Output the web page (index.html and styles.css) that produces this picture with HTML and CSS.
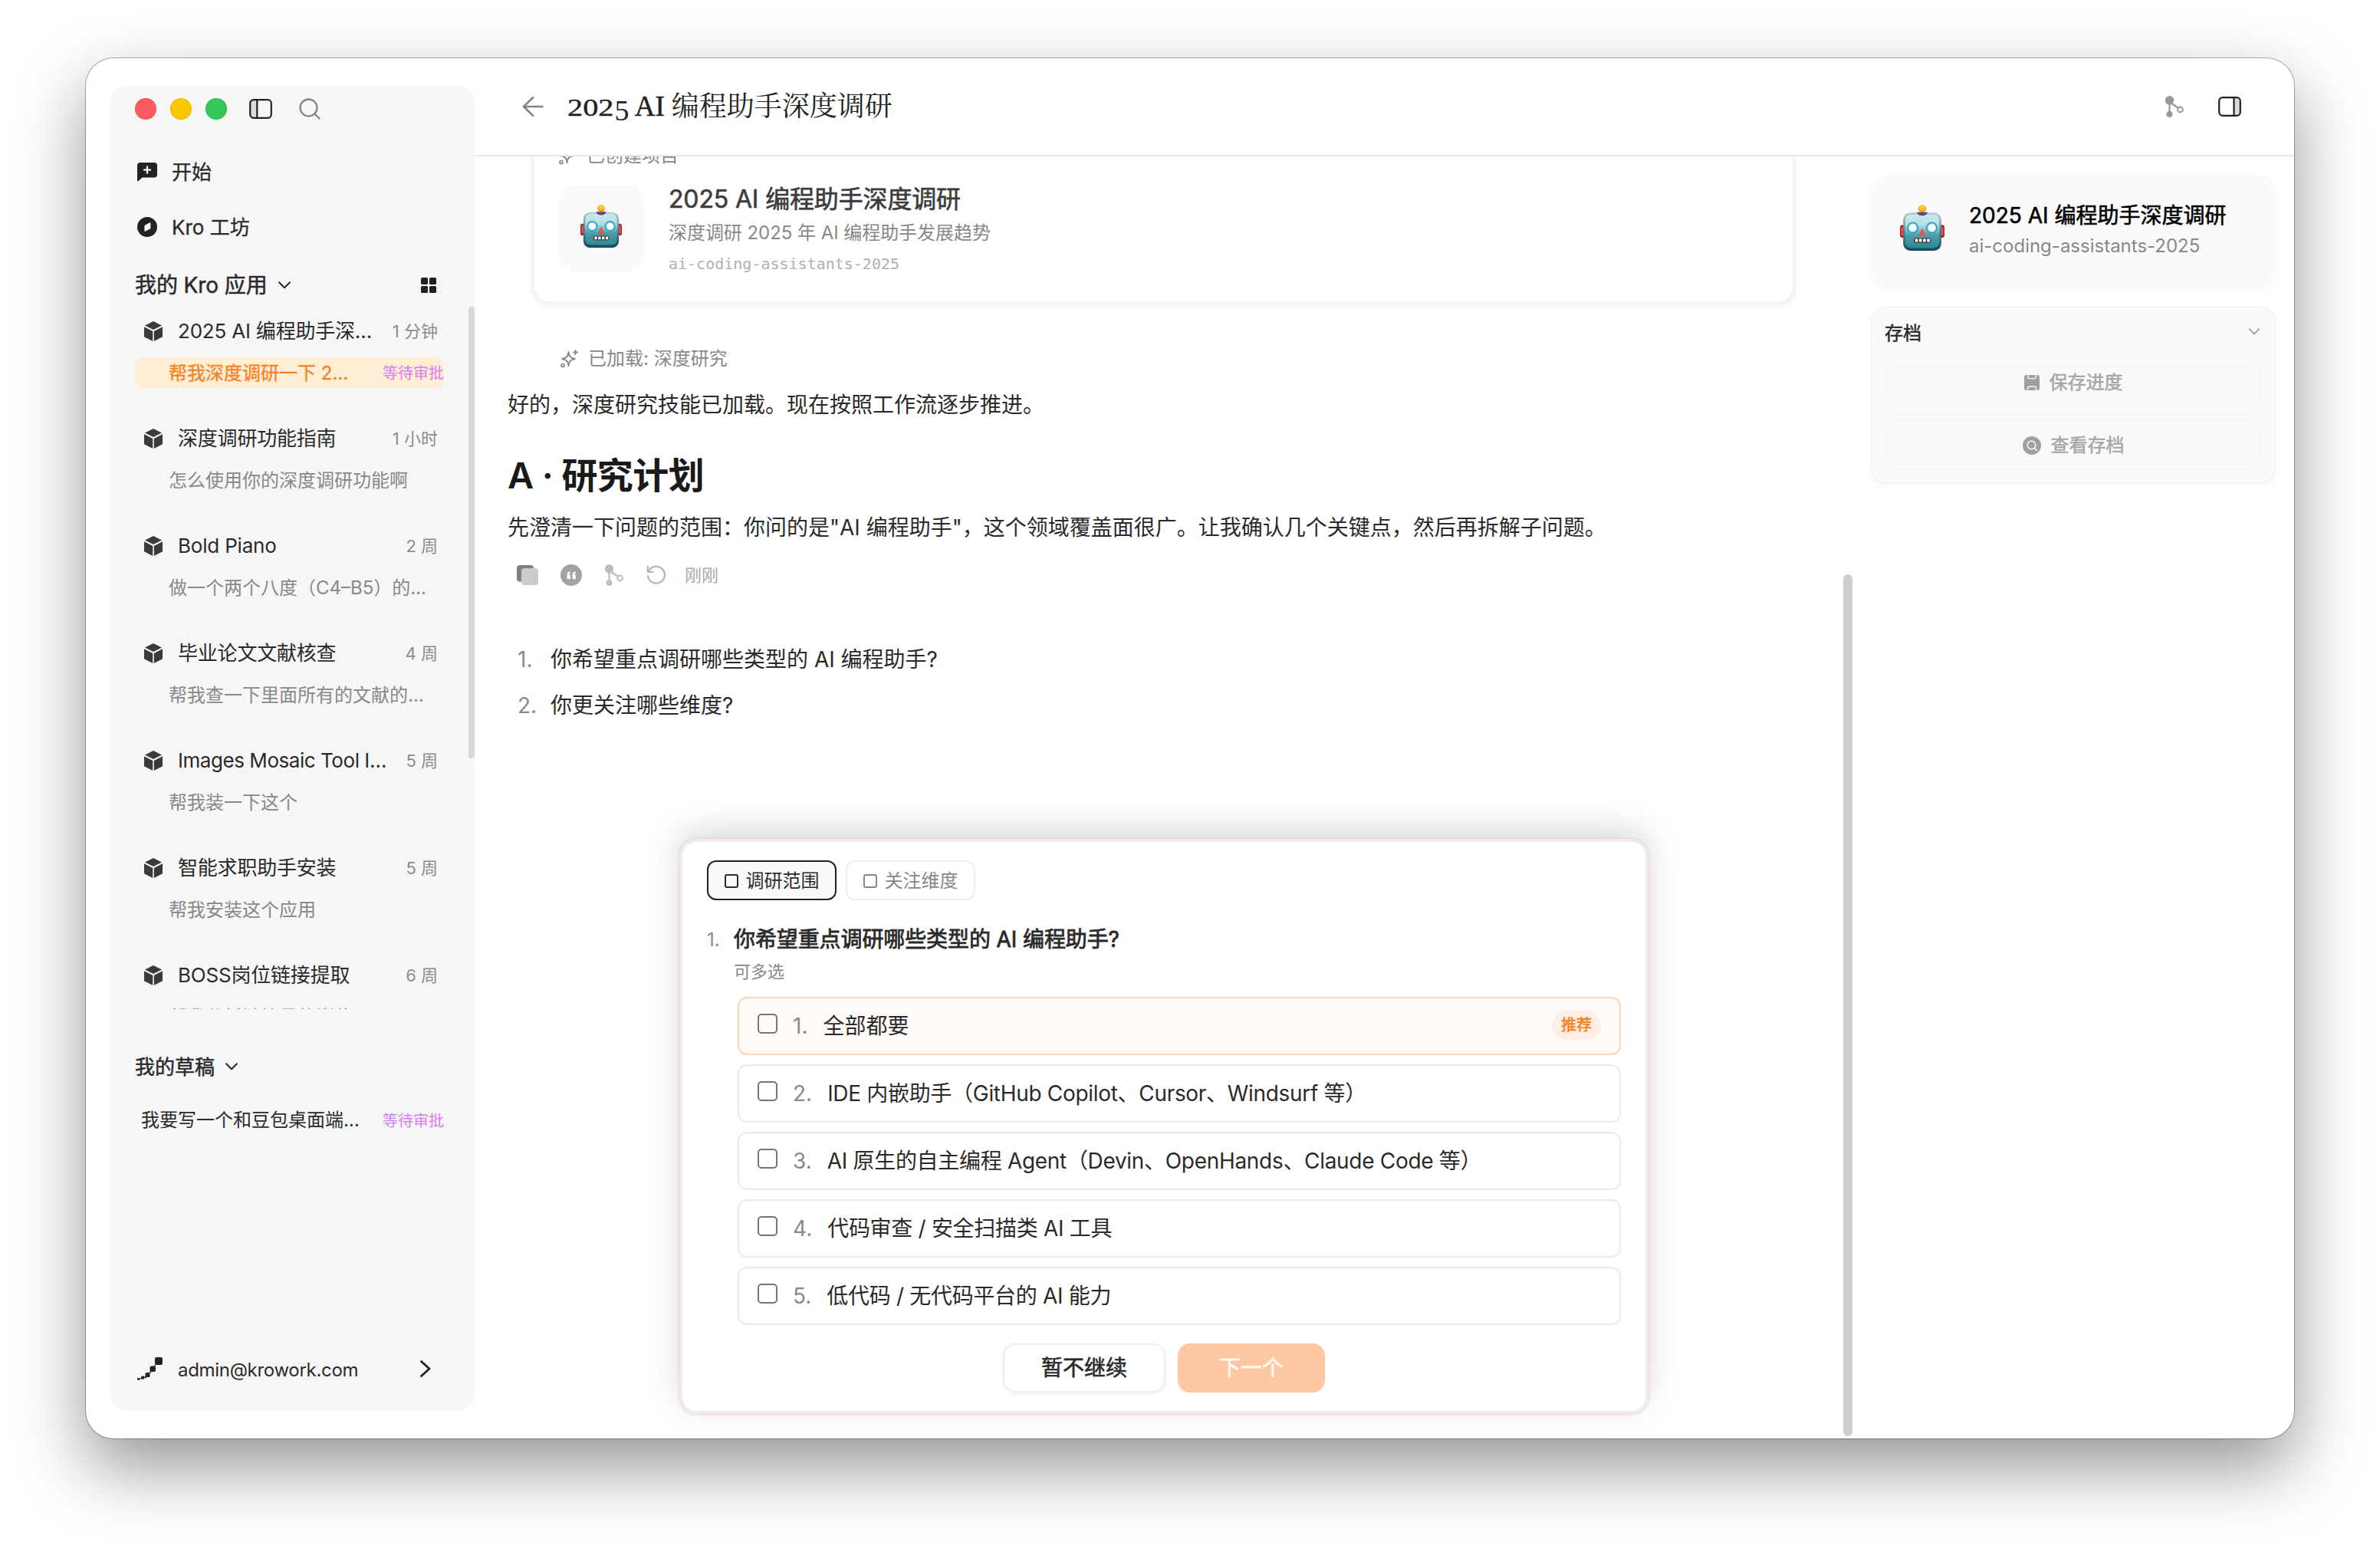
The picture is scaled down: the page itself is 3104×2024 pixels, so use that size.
FILE: index.html
```html
<!DOCTYPE html>
<html lang="zh-CN">
<head>
<meta charset="utf-8">
<title>2025 AI 编程助手深度调研</title>
<link rel="stylesheet" href="styles.css">
</head>
<body>
<svg class="defs" aria-hidden="true">
  <defs>
    <linearGradient id="face" x1="0" y1="0" x2="0" y2="1">
      <stop offset="0" stop-color="#c9eaec"/><stop offset=".3" stop-color="#b5e0e4"/><stop offset=".62" stop-color="#4f9ca6"/><stop offset="1" stop-color="#2c8793"/>
    </linearGradient>
    <linearGradient id="rim" x1="0" y1="0" x2="0" y2="1">
      <stop offset="0" stop-color="#b9d3cd"/><stop offset=".5" stop-color="#4b8790"/><stop offset="1" stop-color="#0b4a59"/>
    </linearGradient>
    <radialGradient id="bulb" cx=".5" cy=".3" r=".7">
      <stop offset="0" stop-color="#ffe14a"/><stop offset="1" stop-color="#f08a12"/>
    </radialGradient>
    <symbol id="robot" viewBox="0 0 56 58">
      <rect x="0" y="25.500" width="56" height="16" rx="3" fill="#b3161c"/>
      <rect x="1.500" y="28" width="2" height="11" rx="1" fill="#e8615c"/>
      <rect x="52.500" y="28" width="2" height="11" rx="1" fill="#e8615c"/>
      <circle cx="28" cy="5" r="5" fill="url(#bulb)"/>
      <rect x="4" y="10" width="48" height="48" rx="9" fill="url(#rim)"/>
      <rect x="6.500" y="12.500" width="43" height="42" rx="7" fill="url(#face)"/>
      <path d="M21 9.500h14q-1.500 4.500-7 4.500t-7-4.500z" fill="#5a4a86"/>
      <circle cx="16" cy="29" r="7.300" fill="#2a9cc0"/><circle cx="16" cy="29" r="5.800" fill="#8fdcf0"/><circle cx="16" cy="29" r="4.500" fill="#fff"/>
      <circle cx="40" cy="29" r="7.300" fill="#2a9cc0"/><circle cx="40" cy="29" r="5.800" fill="#8fdcf0"/><circle cx="40" cy="29" r="4.500" fill="#fff"/>
      <path d="M28 29.500l4.600 9.500h-9.200z" fill="#dd5650"/>
      <rect x="17.500" y="42" width="21" height="6" rx="2" fill="#3a2f33"/>
      <path d="M19 43h3.500v4H19zM24 43h3.500v4H24zM29 43h3.500v4H29zM34 43h3.500v4H34z" fill="#fff"/>
    </symbol>
    <symbol id="cube" viewBox="0 0 24 26">
      <path d="M12 0l11 5.400L12 11 1 5.400z"/><path d="M0 7.200l11.200 5.700V26L0 20.300z"/><path d="M24 7.200l-11.200 5.700V26L24 20.300z"/>
    </symbol>
    <symbol id="down" viewBox="0 0 16 10"><path d="M1 1.200l7 7 7-7" fill="none" stroke="currentColor" stroke-width="2" stroke-linecap="round" stroke-linejoin="round"/></symbol>
    <symbol id="sparkle" viewBox="0 0 24 24">
      <path d="M11.500 3c.6 5.600 2.300 7.800 8.300 9-6 1.200-7.700 3.400-8.300 9-.6-5.600-2.300-7.800-8.300-9 6-1.200 7.700-3.400 8.300-9z" fill="none" stroke="currentColor" stroke-width="2" stroke-linejoin="round"/>
      <path d="M20.500 1v5M18 3.500h5" stroke="currentColor" stroke-width="1.900" stroke-linecap="round"/><circle cx="4" cy="20.500" r="2" fill="none" stroke="currentColor" stroke-width="1.700"/>
    </symbol>
    <symbol id="branch" viewBox="0 0 26 28">
      <circle cx="6.500" cy="5.800" r="5.800" fill="currentColor"/><circle cx="6.500" cy="24" r="4" fill="currentColor"/>
      <path d="M6.500 8v14M8 9l10 7" stroke="currentColor" stroke-width="2.200"/><circle cx="20.500" cy="18" r="3.400" fill="none" stroke="currentColor" stroke-width="2"/>
    </symbol>
  </defs>
</svg>

<div class="window">
  <aside class="sidebar">
    <div class="titlebar">
      <i class="light red"></i><i class="light yellow"></i><i class="light green"></i>
      <svg class="toggle" width="30" height="26" viewBox="0 0 30 26"><path d="M5 2h5v22H5a3 3 0 0 1-3-3V5a3 3 0 0 1 3-3z" fill="#dcdcdc"/><rect x="1.200" y="1.200" width="27.600" height="23.600" rx="4.500" fill="none" stroke="#222" stroke-width="2.200"/><path d="M10.300 1v24" stroke="#222" stroke-width="2.200"/></svg>
      <svg class="search" width="28" height="28" viewBox="0 0 28 28" fill="none" stroke="#858585" stroke-width="2.300" stroke-linecap="round"><circle cx="12.500" cy="12.500" r="11"/><path d="M20.500 20.500l6 6"/></svg>
    </div>
    <nav class="nav">
      <a class="nav-item"><svg width="26" height="26" viewBox="0 0 26 26"><path d="M4 1h18a4 4 0 0 1 4 4v11.500a4 4 0 0 1-4 4H6.500L1.600 25Q0 26 0 24V5a4 4 0 0 1 4-4z" fill="#222"/><path d="M13 5.500v10M8 10.500h10" stroke="#fff" stroke-width="2.200"/></svg><span>开始</span></a>
      <a class="nav-item"><svg width="26" height="26" viewBox="0 0 26 26"><circle cx="13" cy="13" r="13" fill="#222"/><path d="M9.500 11l6.500-3.600q1.300-.5 1.300.9v6.900L10.600 18.600q-1.300.5-1.300-.9z" fill="#fff"/></svg><span>Kro 工坊</span></a>
    </nav>
    <div class="section apps-head"><span>我的 Kro 应用</span><svg width="16" height="10"><use href="#down"/></svg>
      <svg class="grid-icon" width="20" height="20" viewBox="0 0 20 20" fill="#222"><rect width="9" height="9" rx="1.500"/><rect x="11" width="9" height="9" rx="1.500"/><rect y="11" width="9" height="9" rx="1.500"/><rect x="11" y="11" width="9" height="9" rx="1.500"/></svg>
    </div>
    <div class="apps">
      <div class="app"><div class="app-title"><svg class="cube"><use href="#cube"/></svg><span>2025 AI 编程助手深…</span><time>1 分钟</time></div><div class="app-sub active"><span>帮我深度调研一下 2…</span><em>等待审批</em></div></div>
      <div class="app"><div class="app-title"><svg class="cube"><use href="#cube"/></svg><span>深度调研功能指南</span><time>1 小时</time></div><div class="app-sub"><span>怎么使用你的深度调研功能啊</span></div></div>
      <div class="app"><div class="app-title"><svg class="cube"><use href="#cube"/></svg><span>Bold Piano</span><time>2 周</time></div><div class="app-sub"><span>做一个两个八度（C4–B5）的…</span></div></div>
      <div class="app"><div class="app-title"><svg class="cube"><use href="#cube"/></svg><span>毕业论文文献核查</span><time>4 周</time></div><div class="app-sub"><span>帮我查一下里面所有的文献的…</span></div></div>
      <div class="app"><div class="app-title"><svg class="cube"><use href="#cube"/></svg><span class="tight">Images Mosaic Tool I…</span><time>5 周</time></div><div class="app-sub"><span>帮我装一下这个</span></div></div>
      <div class="app"><div class="app-title"><svg class="cube"><use href="#cube"/></svg><span>智能求职助手安装</span><time>5 周</time></div><div class="app-sub"><span>帮我安装这个应用</span></div></div>
      <div class="app"><div class="app-title"><svg class="cube"><use href="#cube"/></svg><span>BOSS岗位链接提取</span><time>6 周</time></div><div class="app-sub"><span>帮我分析链接里的岗位</span></div></div>
    </div>
    <div class="section drafts-head"><span>我的草稿</span><svg width="16" height="10"><use href="#down"/></svg></div>
    <div class="draft"><span>我要写一个和豆包桌面端…</span><em>等待审批</em></div>
    <div class="account">
      <svg width="34" height="30" viewBox="0 0 34 30" fill="#222"><rect x="23" y="0" width="10" height="10" rx="2"/><rect x="16.500" y="11.500" width="7.500" height="7.500" rx="2"/><rect x="10.500" y="20" width="6" height="6" rx="1.500"/><rect x="5" y="24.500" width="4.500" height="4" rx="1.500"/><rect x="0" y="27" width="3.500" height="2.800" rx="1"/><path d="M22 11l2-2v3zM15 20.500l3-3v3zM8 26.500l4-2.500v3zM2 28l5-1.500v2z"/></svg>
      <span>admin@krowork.com</span>
      <svg class="next" width="14" height="22" viewBox="0 0 14 22"><path d="M1.500 1.500L12 11 1.500 20.500" fill="none" stroke="#222" stroke-width="2.800" stroke-linecap="round" stroke-linejoin="round"/></svg>
    </div>
    <i class="side-scroll"></i>
  </aside>

  <main class="main">
    <header class="header">
      <svg class="back" width="28" height="26" viewBox="0 0 28 26" fill="none" stroke="#858585" stroke-width="2.700" stroke-linecap="round" stroke-linejoin="round"><path d="M26.500 13H2M14 1.300L2 13l12 11.700"/></svg>
      <h1><span class="fig">202</span><span class="fig-low">5</span><span class="caps"> AI</span> 编程助手深度调研</h1>
      <svg class="share" width="26" height="28"><use href="#branch"/></svg>
      <svg width="30" height="26" viewBox="0 0 30 26"><path d="M20 2h5a3 3 0 0 1 3 3v16a3 3 0 0 1-3 3h-5z" fill="#dcdcdc"/><rect x="1.200" y="1.200" width="27.600" height="23.600" rx="4.500" fill="none" stroke="#222" stroke-width="2.200"/><path d="M20.500 1v24" stroke="#222" stroke-width="2.200"/></svg>
    </header>
    <div class="body">
      <section class="chat">
        <article class="project">
          <div class="tool-line"><svg><use href="#sparkle"/></svg><span>已创建项目</span></div>
          <div class="project-row">
            <div class="tile"><svg width="54" height="56"><use href="#robot"/></svg></div>
            <div class="project-text"><h3>2025 AI 编程助手深度调研</h3><p>深度调研 2025 年 AI 编程助手发展趋势</p><code>ai-coding-assistants-2025</code></div>
          </div>
        </article>
        <div class="tool-line loaded"><svg><use href="#sparkle"/></svg><span>已加载: 深度研究</span></div>
        <p class="text first">好的，深度研究技能已加载。现在按照工作流逐步推进。</p>
        <h2>A · 研究计划</h2>
        <p class="text">先澄清一下问题的范围：你问的是"AI 编程助手"，这个领域覆盖面很广。让我确认几个关键点，然后再拆解子问题。</p>
        <div class="actions">
          <svg width="28" height="26" viewBox="0 0 28 26"><rect width="22" height="21.500" rx="4" fill="#808080"/><rect x="6" y="4" width="22" height="22" rx="4" fill="#cbcbcb"/></svg>
          <svg width="28" height="28" viewBox="0 0 28 28"><circle cx="14" cy="14" r="14" fill="#a3a3a3"/><path d="M8.500 19v-5q0-4 4-5v2.300q-1.400.7-1.500 2.200h1.800V19zM15.500 19v-5q0-4 4-5v2.300q-1.400.7-1.500 2.200h1.800V19z" fill="#fff"/></svg>
          <svg class="a-branch" width="26" height="28"><use href="#branch"/></svg>
          <svg width="26" height="26" viewBox="0 0 26 26" fill="none" stroke="#b8b8b8" stroke-width="2.300" stroke-linecap="round" stroke-linejoin="round"><path d="M2.800 8.200A11 11 0 1 1 2 14.500M1.800 2v6.800h6.800"/></svg>
          <span>刚刚</span>
        </div>
        <ol class="questions"><li><b>1.</b>你希望重点调研哪些类型的 AI 编程助手?</li><li><b>2.</b>你更关注哪些维度?</li></ol>

        <div class="ask">
          <div class="tabs"><button class="tab on"><i></i>调研范围</button><button class="tab"><i></i>关注维度</button></div>
          <div class="ask-q"><b>1.</b><strong>你希望重点调研哪些类型的 AI 编程助手?</strong></div>
          <p class="hint">可多选</p>
          <div class="options">
            <label class="option best"><i></i><b>1.</b><span>全部都要</span><em>推荐</em></label>
            <label class="option"><i></i><b>2.</b><span>IDE 内嵌助手（GitHub Copilot、Cursor、Windsurf 等）</span></label>
            <label class="option"><i></i><b>3.</b><span>AI 原生的自主编程 Agent（Devin、OpenHands、Claude Code 等）</span></label>
            <label class="option"><i></i><b>4.</b><span>代码审查 / 安全扫描类 AI 工具</span></label>
            <label class="option"><i></i><b>5.</b><span>低代码 / 无代码平台的 AI 能力</span></label>
          </div>
          <div class="buttons"><button class="skip">暂不继续</button><button class="go">下一个</button></div>
        </div>
        <i class="chat-scroll"></i>
      </section>

      <aside class="panel">
        <div class="info"><svg width="58" height="60"><use href="#robot"/></svg><div><h4>2025 AI 编程助手深度调研</h4><p>ai-coding-assistants-2025</p></div></div>
        <div class="archive">
          <div class="archive-head"><span>存档</span><svg width="14" height="9"><use href="#down"/></svg></div>
          <button class="arch-btn"><svg width="20" height="20" viewBox="0 0 20 20"><rect width="20" height="20" rx="3" fill="#a0a0a0"/><path d="M5 0v3q0 1.600 1.600 1.600h6.800Q15 4.600 15 3V0M4.500 20v-3q0-1.800 1.800-1.800h7.400q1.800 0 1.800 1.800v3" fill="none" stroke="#fafafa" stroke-width="1.400"/></svg>保存进度</button>
          <button class="arch-btn second"><svg width="24" height="24" viewBox="0 0 24 24"><circle cx="12" cy="12" r="12" fill="#a0a0a0"/><circle cx="11.500" cy="11.500" r="5.300" fill="none" stroke="#fafafa" stroke-width="1.500"/><path d="M15.300 15.500l3 3" stroke="#fafafa" stroke-width="1.500" stroke-linecap="round"/></svg>查看存档</button>
        </div>
      </aside>
    </div>
  </main>
</div>
</body>
</html>
```
FILE: styles.css
```css
* { box-sizing: border-box; margin: 0; padding: 0; }
body {
  width: 3104px; height: 2024px; padding: 76px 112px; overflow: hidden; background: #fff;
  font-family: Inter, "Noto Sans CJK SC", sans-serif; font-size: 28px; line-height: 1.4; color: #2a2a2a;
}
.defs { position: absolute; width: 0; height: 0; }
svg { display: block; flex: none; }
i, em, b { font-style: normal; font-weight: 400; }
button { font: inherit; color: inherit; background: none; border: 0; }

.window {
  display: flex; width: 2880px; height: 1800px; padding: 36px 0 36px 32px; border-radius: 36px; background: #fff;
  box-shadow: 0 0 0 1px rgba(0,0,0,.3), 0 38px 92px rgba(0,0,0,.42);
}

/* sidebar */
.sidebar {
  position: relative; display: flex; flex-direction: column; width: 475px; height: 1728px;
  padding-bottom: 35px; border-radius: 22px; background: #f6f6f6;
}
.titlebar { display: flex; align-items: center; height: 60px; padding-left: 32px; }
.light { width: 28px; height: 28px; margin-right: 18px; border-radius: 50%; box-shadow: inset 0 0 0 1px rgba(0,0,0,.08); }
.red { background: #ff5a60; } .yellow { background: #fac800; } .green { background: #34c759; }
.toggle { margin-left: 11px; }
.search { margin-left: 35px; }
.nav { margin-top: 16px; }
.nav-item { display: flex; align-items: center; gap: 19px; height: 72px; padding-left: 35px; font-size: 26px; -webkit-text-stroke: .3px; }
.nav-item span, .section span, .app-sub span { padding-top: 2px; }
.section { display: flex; align-items: center; height: 44px; padding-left: 32px; -webkit-text-stroke: .5px; }
.section svg:first-of-type { margin-left: 14px; }
.apps-head { margin-top: 18px; font-size: 28px; letter-spacing: -.1px; }
.section .grid-icon { margin-left: auto; margin-right: 50px; }
.apps { height: 916px; margin-top: 6px; overflow: hidden; }
.app { height: 140px; }
.app-title { display: flex; align-items: center; height: 64px; padding: 0 48px 0 44px; font-size: 26px; white-space: nowrap; }
.app-title span { letter-spacing: -.2px; }
.app-title .tight { letter-spacing: -.45px; }
.cube { width: 24px; height: 26px; margin-right: 20px; fill: #3a3a3a; }
time { margin-left: auto; font-size: 22px; color: #8c8c8c; }
.app-sub { display: flex; align-items: center; width: 403px; height: 40px; margin: 2px 0 0 32px; padding-left: 44px; border-radius: 12px; font-size: 24px; color: #888; white-space: nowrap; }
.app-sub.active { background: #ffedd4; color: #f5821f; -webkit-text-stroke: .3px; }
.app-sub em, .draft em { margin-left: auto; padding-top: 2px; font-size: 20px; color: #dd7af5; -webkit-text-stroke: 0; }
.drafts-head { margin-top: 53px; font-size: 26px; }
.draft { display: flex; align-items: center; width: 395px; height: 40px; margin: 28px 0 0 40px; font-size: 24px; white-space: nowrap; }
.account { display: flex; align-items: center; height: 40px; margin-top: auto; padding: 0 57px 0 35px; font-size: 24px; }
.account span { margin: 3px 0 0 19px; letter-spacing: -.3px; }
.next { margin-left: auto; }
.side-scroll { position: absolute; right: 0; top: 288px; width: 8px; height: 589px; border-radius: 4px; background: #d8d8d8; }

/* header */
.main { display: flex; flex: 1; flex-direction: column; height: 1800px; margin-top: -36px; }
.header { display: flex; align-items: center; height: 128px; padding: 0 69px 0 62px; border-bottom: 2px solid #e8e8e8; }
h1 { margin: 2px auto 0 31px; font: 400 36px/48px "Liberation Serif", "Noto Serif CJK SC", "Noto Sans CJK SC", serif; color: #222; white-space: pre; }
/* old-style figures: x-height digits, the five hangs below the baseline */
.fig { display: inline-block; margin-right: 15px; font-size: 31px; transform: scaleX(1.3); transform-origin: 0 50%; -webkit-text-stroke: .4px; }
.fig-low { display: inline-block; font-size: 38px; line-height: 40px; transform: translateY(6px); }
.caps { font-size: 37px; -webkit-text-stroke: .5px; }
.share { margin-right: 44px; color: #999; }
.body { display: flex; flex: 1; min-height: 0; }

/* conversation */
.chat { position: relative; display: flex; flex-direction: column; width: 1797px; height: 1672px; padding: 0 0 32px 43px; overflow: hidden; border-radius: 0 0 0 4px; }
.project { flex: none; width: 1649px; height: 233px; margin: -40px 0 0 31px; padding: 21px 30px 0 31px; border: 4px solid #f3f3f3; border-radius: 24px; box-shadow: 0 3px 6px rgba(0,0,0,.06); }
.tool-line { display: flex; align-items: center; height: 28px; font-size: 24px; color: #888; }
.tool-line svg { width: 24px; height: 24px; margin-right: 13px; }
.project-row { display: flex; align-items: center; gap: 32px; height: 112px; margin-top: 25px; }
.tile { display: grid; place-items: center; width: 112px; height: 112px; padding-bottom: 6px; border-radius: 20px; background: #fafafa; }
.project-text { padding-top: 3px; }
h3 { font-size: 32px; line-height: 42px; font-weight: 400; color: #3c3c3c; letter-spacing: -.15px; -webkit-text-stroke: .6px; }
.project p { font-size: 24px; line-height: 46px; color: #888; letter-spacing: -.05px; }
.project code { display: block; font: 20px/34px "DejaVu Sans Mono", monospace; color: #b0b0b0; }
.loaded { margin: 57px 0 0 68px; }
.text { height: 44px; font-size: 28px; line-height: 44px; white-space: nowrap; }
.first { margin-top: 24px; }
h2 { margin: 38px 0 14px; font-size: 47px; line-height: 64px; font-weight: 600; letter-spacing: -.6px; color: #1a1a1a; }
.actions { display: flex; align-items: center; gap: 29px; height: 28px; margin: 26px 0 0 12px; font-size: 22px; color: #aaa; }
.actions span { margin-left: -5px; }
.a-branch { color: #bdbdbd; }
.questions { margin: 66px 0 0 13px; list-style: none; }
.questions li { display: flex; height: 60px; line-height: 60px; }
.questions b { width: 43px; color: #8a8a8a; }

/* question card */
.ask {
  align-self: flex-start; width: 1264px; margin: auto 0 0 224px; padding: 24px 32px; border: 4px solid #ececec; border-radius: 22px; background: #fff;
  box-shadow: 0 0 0 2px rgba(250,200,165,.36), 0 -12px 44px rgba(0,0,0,.15);
}
.tabs { display: flex; gap: 12px; }
.tab { display: flex; align-items: center; justify-content: center; gap: 10px; width: 169px; height: 52px; padding-top: 1px; border: 2px solid #ededed; border-radius: 12px; font-size: 24px; color: #888; }
.tab i { width: 18px; height: 18px; border: 2px solid currentColor; border-radius: 3px; }
.tab.on { border-color: #222; background: #fafafa; color: #2a2a2a; }
.ask-q { display: flex; align-items: center; height: 40px; margin-top: 32px; }
.ask-q b { width: 35px; font-size: 24px; color: #888; }
.ask-q strong { font-size: 28px; font-weight: 400; -webkit-text-stroke: .8px; letter-spacing: -.1px; }
.hint { height: 32px; margin: 5px 0 0 35px; font-size: 22px; line-height: 32px; color: #888; }
.options { display: flex; flex-direction: column; gap: 12px; margin: 17px 0 0 40px; }
.option { display: flex; align-items: center; height: 76px; padding: 0 24px; border: 2px solid #ebebeb; border-radius: 12px; white-space: nowrap; }
.option i { width: 26px; height: 26px; margin-bottom: 6px; border: 2px solid #767676; border-radius: 5px; }
.option b { margin: 0 20px; padding-top: 2px; color: #8a8a8a; }
.option span { padding-top: 2px; letter-spacing: -.31px; }
.option.best span { letter-spacing: 0; }
.best { border-color: #fbd5b5; background: #fffaf8; }
.option em { display: grid; place-items: center; width: 64px; height: 38px; margin: 0 0 2px auto; border-radius: 19px; background: #ffeee6; font-size: 20px; color: #f5821f; -webkit-text-stroke: .6px; }
.buttons { display: flex; justify-content: center; gap: 16px; margin: 24px 0 0 0; }
.buttons button { height: 64px; padding-top: 2px; border-radius: 16px; font-size: 28px; }
.skip { width: 212px; border: 2px solid #ededed; box-shadow: 0 2px 4px rgba(0,0,0,.05); -webkit-text-stroke: .6px; }
.go { width: 192px; background: #ffc8a2; color: #fff; -webkit-text-stroke: .4px; }
.chat-scroll { position: absolute; right: 0; top: 545px; width: 12px; height: 1124px; border-radius: 6px; background: #cecece; }

/* right panel */
.panel { flex: 1; padding: 24px 24px 0; }
.info { display: flex; align-items: center; height: 148px; padding: 0 0 10px 38px; border-radius: 24px; background: #fafafa; box-shadow: 0 2px 6px rgba(0,0,0,.03); }
.info div { margin: 5px 0 0 32px; }
h4 { font-size: 28px; line-height: 42px; font-weight: 400; color: #000; -webkit-text-stroke: .6px; white-space: nowrap; }
.info p { font-size: 24px; line-height: 38px; color: #888; }
.archive { height: 230px; margin-top: 24px; padding: 0 17px; border: 1px solid #eee; border-radius: 20px; background: #fafafa; box-shadow: 0 4px 10px rgba(0,0,0,.03); }
.archive-head { display: flex; align-items: center; justify-content: space-between; height: 64px; padding: 3px 3px 0 0; font-size: 24px; -webkit-text-stroke: .5px; }
.archive-head svg { margin-top: -4px; color: #999; }
.arch-btn { display: flex; align-items: center; justify-content: center; gap: 13px; width: 100%; height: 66px; padding-top: 1px; border: 2px solid #f6f6f6; border-radius: 18px; font-size: 24px; color: #a6a6a6; -webkit-text-stroke: .5px; }
.second { margin-top: 16px; }
```
